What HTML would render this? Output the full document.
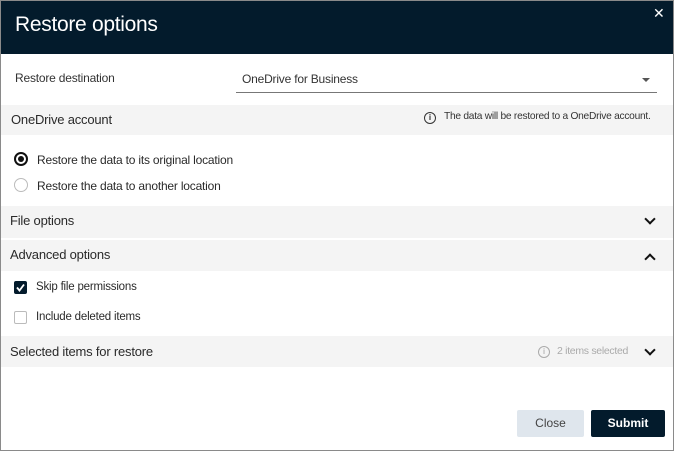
<!DOCTYPE html>
<html><head><style>
*{margin:0;padding:0;box-sizing:border-box}
body{width:674px;height:451px;background:#fff;font-family:"Liberation Sans",sans-serif;color:#2a2a2a;position:relative;overflow:hidden}
.frame{position:absolute;left:0;top:0;width:674px;height:451px;border:1px solid #8a8a8a}
.hdr{position:absolute;left:1px;top:1px;width:672px;height:53px;background:#031b2c;color:#fff}
.hdr h1{position:absolute;left:14px;top:12px;font-size:21px;font-weight:normal;letter-spacing:-0.3px}
.x{position:absolute;left:652px;top:4px;font-size:14px;color:#fff}
.t{position:absolute;font-size:12px;letter-spacing:-0.2px;white-space:nowrap}
.band{position:absolute;left:1px;width:672px;background:#f4f4f4}
.chev{position:absolute;width:8px;height:8px;border-right:2px solid #111;border-bottom:2px solid #111}
</style></head><body>
<div class="hdr"><h1>Restore options</h1><div class="x">✕</div></div>
<div class="t" style="left:15px;top:71px;color:#333">Restore destination</div>
<div class="t" style="left:242px;top:72px;color:#333">OneDrive for Business</div>
<div style="position:absolute;left:642px;top:78px;border-left:4px solid transparent;border-right:4px solid transparent;border-top:4px solid #555"></div>
<div style="position:absolute;left:236px;top:92px;width:421px;height:1px;background:#777"></div>

<div class="band" style="top:105px;height:30px"></div>
<div class="t" style="left:11px;top:112px;font-size:13px">OneDrive account</div>
<div style="position:absolute;left:424px;top:112px;width:12px;height:12px;border:1px solid #333;border-radius:50%;font-size:8px;text-align:center;line-height:10px;font-weight:bold">i</div>
<div class="t" style="left:444px;top:111px;font-size:10.2px;color:#333;letter-spacing:-0.25px">The data will be restored to a OneDrive account.</div>

<div style="position:absolute;left:14px;top:152px;width:14px;height:14px;border:2px solid #111;border-radius:50%"></div>
<div style="position:absolute;left:18px;top:156px;width:6px;height:6px;background:#111;border-radius:50%"></div>
<div class="t" style="left:37px;top:153px">Restore the data to its original location</div>
<div style="position:absolute;left:14px;top:178px;width:14px;height:14px;border:1px solid #bbb;border-radius:50%"></div>
<div class="t" style="left:37px;top:179px">Restore the data to another location</div>

<div class="band" style="top:206px;height:32px"></div>
<div class="t" style="left:10px;top:213px;font-size:13px">File options</div>
<div class="chev" style="left:646px;top:215px;transform:rotate(45deg)"></div>

<div class="band" style="top:240px;height:31px"></div>
<div class="t" style="left:10px;top:247px;font-size:13px">Advanced options</div>
<div class="chev" style="left:646px;top:255px;transform:rotate(-135deg)"></div>

<div style="position:absolute;left:14px;top:281px;width:13px;height:13px;background:#031b2c;border-radius:2px"></div>
<svg style="position:absolute;left:14px;top:281px" width="13" height="13"><path d="M3 6.5 L5.5 9.5 L10 3.5" stroke="#fff" stroke-width="1.8" fill="none"/></svg>
<div class="t" style="left:36px;top:281px;font-size:11.5px">Skip file permissions</div>
<div style="position:absolute;left:14px;top:311px;width:13px;height:13px;border:1px solid #bbb;border-radius:2px"></div>
<div class="t" style="left:36px;top:311px;font-size:11.5px">Include deleted items</div>

<div class="band" style="top:336px;height:31px"></div>
<div class="t" style="left:10px;top:344px;font-size:13px">Selected items for restore</div>
<div style="position:absolute;left:538px;top:346px;width:12px;height:12px;border:1px solid #aaa;border-radius:50%;font-size:8px;text-align:center;line-height:10px;color:#999">i</div>
<div class="t" style="left:557px;top:345px;font-size:10.5px;color:#aaa;letter-spacing:-0.3px">2 items selected</div>
<div class="chev" style="left:646px;top:346px;transform:rotate(45deg)"></div>

<div style="position:absolute;left:517px;top:410px;width:67px;height:27px;background:#dfe6ed;border-radius:2px;color:#444;font-size:12px;text-align:center;line-height:27px">Close</div>
<div style="position:absolute;left:591px;top:410px;width:74px;height:27px;background:#031b2c;border-radius:2px;color:#fff;font-size:12px;font-weight:bold;text-align:center;line-height:27px">Submit</div>
<div class="frame"></div>
</body></html>
